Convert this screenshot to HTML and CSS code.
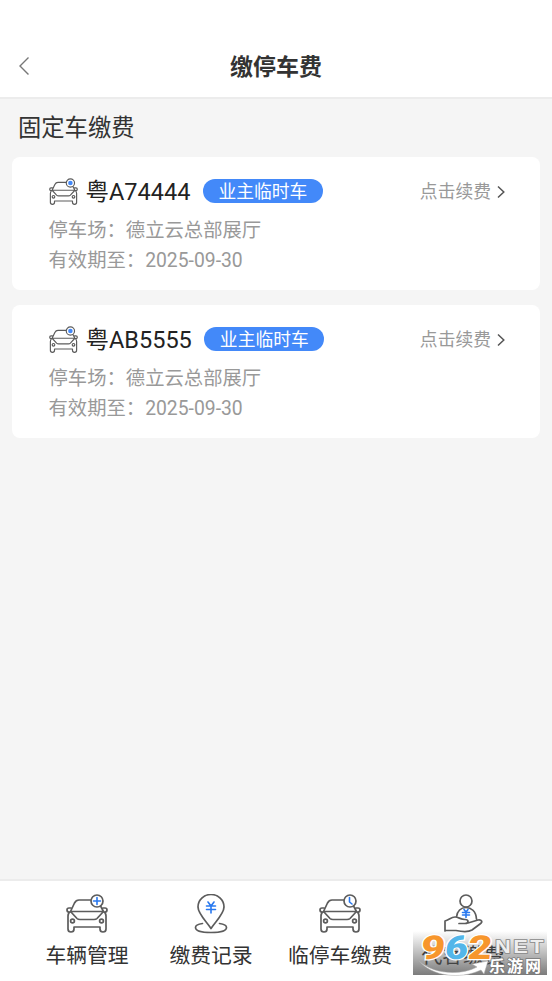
FILE: index.html
```html
<!DOCTYPE html>
<html lang="zh-CN">
<head>
<meta charset="utf-8">
<title>缴停车费</title>
<link rel="stylesheet" href="styles.css">
</head>
<body>
<svg class="defs" width="0" height="0" aria-hidden="true">
  <symbol id="car" viewBox="0 0 42 40">
    <path d="M26 6H13Q10 6 8.500 9L4.500 17.500H37.500L34 11M5 14H3Q1 14 1 16T3 18H5M37 14H39Q41 14 41 16T39 18H37M4.500 17.500Q2 19 2 22V35Q2 38 5 38Q8 38 8 35V33H34V35Q34 38 37 38Q40 38 40 35V22Q40 19 37.500 17.500M4.500 17.500L11 24.500Q12 25.500 14 25.500H28Q30 25.500 31 24.500L37.500 17.500"/>
    <circle cx="6.500" cy="27" r="1.900"/><circle cx="35.500" cy="27" r="1.900"/>
  </symbol>
</svg>
<div class="app">
  <header class="bar">
    <svg class="back" viewBox="0 0 12 20"><path d="M10.500 1.500L2 10L10.500 18.500"/></svg>
    <h1 class="title">缴停车费</h1>
  </header>
  <main class="content">
    <h2 class="section">固定车缴费</h2>
    <article class="card">
      <div class="head">
        <svg class="icon small" viewBox="0 0 42 40"><use href="#car"/><circle class="disc" cx="31" cy="7" r="6"/><circle class="dot" cx="31" cy="7" r="3.300"/></svg>
        <span class="plate">粤A74444</span><span class="tag">业主临时车</span>
        <span class="renew">点击续费</span><svg class="next" viewBox="0 0 8 14"><path d="M1 1.500L6.800 7L1 12.500"/></svg>
      </div>
      <p class="info">停车场：德立云总部展厅</p>
      <p class="info">有效期至：2025-09-30</p>
    </article>
    <article class="card">
      <div class="head">
        <svg class="icon small" viewBox="0 0 42 40"><use href="#car"/><circle class="disc" cx="31" cy="7" r="6"/><circle class="dot" cx="31" cy="7" r="3.300"/></svg>
        <span class="plate">粤AB5555</span><span class="tag">业主临时车</span>
        <span class="renew">点击续费</span><svg class="next" viewBox="0 0 8 14"><path d="M1 1.500L6.800 7L1 12.500"/></svg>
      </div>
      <p class="info">停车场：德立云总部展厅</p>
      <p class="info">有效期至：2025-09-30</p>
    </article>
  </main>
  <nav class="tabs">
    <div class="tab">
      <svg class="icon" viewBox="0 0 42 40"><use href="#car"/><circle class="disc" cx="31" cy="7" r="6"/><path class="blue" d="M31 3.500V10.500M27.500 7H34.500"/></svg>
      <span>车辆管理</span>
    </div>
    <div class="tab">
      <svg class="icon" viewBox="0 0 42 40"><path d="M21 34.500C17 28 8 20 8 13A13 12.500 0 0 1 34 13C34 20 25 28 21 34.500ZM12.500 29.500C8 30 5.500 31.500 5.500 33.500C5.500 37 12 38.500 21 38.500S36.500 37 36.500 33.500C36.500 31.500 34 30 29.500 29.500"/><path class="blue" d="M18 8L21 12L24 8M16.500 12H25.500M16.500 15.500H25.500M21 12V19"/></svg>
      <span>缴费记录</span>
    </div>
    <div class="tab">
      <svg class="icon" viewBox="0 0 42 40"><use href="#car"/><circle class="disc" cx="31" cy="7" r="6"/><path class="blue" d="M30.500 3.500V8L33 10"/></svg>
      <span>临停车缴费</span>
    </div>
    <div class="tab">
      <svg class="icon" viewBox="0 0 42 40"><circle cx="24" cy="7" r="6"/><path d="M14.500 23C15 17 19 13.500 24 13.500S34 17 34.500 25M3 37V27C7 26 9 23 13 23C17 23 18 25.500 23 25.500C27 25.500 27 29.500 23 29.500H17M26 29L36 26C40 25.500 41 28 38 30L30 36C26 38.500 21 38 14 36.500H3"/><path class="blue" d="M22 15.500L24 18L26 15.500M20.500 18.500H27.500M20.500 21H27.500M24 18V23.500"/></svg>
      <span>代客缴费</span>
    </div>
    <div class="mark">
      <svg viewBox="0 0 134 75">
        <path class="swoosh" d="M6 60C20 73 47 75 64 66L59 63L75 60L71 73L68 69C46 79 19 75 6 60Z"/>
        <g class="digits" transform="translate(6 0) skewX(-6)"><text class="orange" x="7" y="58" textLength="24" lengthAdjust="spacingAndGlyphs">9</text><text class="cyan" x="31" y="58" textLength="23" lengthAdjust="spacingAndGlyphs">6</text><text class="orange" x="54" y="58" textLength="24" lengthAdjust="spacingAndGlyphs">2</text></g>
        <text class="net" x="82" y="51.500" textLength="51" lengthAdjust="spacingAndGlyphs">NET</text>
        <text class="site" x="76" y="71" textLength="52">乐游网</text>
      </svg>
    </div>
  </nav>
</div>
</body>
</html>
```
FILE: styles.css
```css
* { box-sizing: border-box; }
body { margin: 0; font-family: Roboto, "Noto Sans CJK SC", sans-serif; color: #333; background: #f5f5f5; }
h1, h2, p { margin: 0; font-weight: 400; }
svg { fill: none; flex-shrink: 0; display: block; }
.defs { position: absolute; }
.app { height: 981px; display: flex; flex-direction: column; overflow: hidden; }
.bar { height: 99px; padding: 36px 18px 0; display: grid; grid-template-columns: 12px 1fr 12px; align-items: center; background: #fff; border-bottom: 2px solid #ececec; }
.back { width: 12px; height: 20px; margin-bottom: 2px; stroke: #777; stroke-width: 1.4; }
.title { padding-top: 3px; font-size: 23px; line-height: 34px; font-weight: 700; text-align: center; }
.content { flex: 1; padding: 0 12px; }
.section { height: 58px; padding-left: 6px; font-size: 23.3px; line-height: 59px; }
.card { height: 133px; margin-bottom: 15px; padding: 17px 35px 0 36.500px; border-radius: 8px; background: #fff; }
.head { height: 35px; margin-bottom: 7px; display: flex; align-items: center; }
.plate { margin-left: 8px; color: #222; font-size: 23.500px; line-height: 34px; }
.tag { width: 120px; height: 24px; margin: 0 0 2px 12.500px; border-radius: 12px; background: #4389f9; color: #fff; font-size: 17.800px; line-height: 25px; text-align: center; }
.renew { margin-left: auto; color: #999; font-size: 17.800px; line-height: 26px; }
.next { width: 8px; height: 14px; margin-left: 6px; stroke: #555; stroke-width: 1.5; }
.info { color: #999; font-size: 19.330px; line-height: 30.300px; }
.tabs { position: relative; height: 102px; padding: 13px 26px 0 25px; display: grid; grid-template-columns: 124px 124px 134px 112px; background: #fff; border-top: 2px solid #ececec; }
.tab { display: flex; flex-direction: column; align-items: center; font-size: 20.800px; line-height: 30px; white-space: nowrap; }
.tab span { margin-top: 7px; }
.icon { width: 42px; height: 40px; stroke: #5c5c5c; stroke-width: 1.700; stroke-linecap: round; stroke-linejoin: round; }
.small { width: 29px; height: 28px; stroke-width: 1.700; }
.disc { fill: #fff; }
.dot { fill: #4389f9; stroke: none; }
.blue { stroke: #2878ef; stroke-width: 1.600; }
.mark { position: absolute; left: 413px; top: 50px; width: 134px; height: 44px; background: linear-gradient(rgba(80,80,80,0), rgba(80,80,80,.75)); }
.mark svg { position: absolute; left: 0; bottom: -1px; width: 134px; height: 75px; overflow: visible; }
.digits { font: 900 33px Roboto, sans-serif; stroke: #fff; stroke-width: 2.500; paint-order: stroke; }
.orange { fill: #f7962c; }
.cyan { fill: #53b6e9; }
.net { font: 700 18px "Liberation Sans", sans-serif; letter-spacing: 2px; fill: #eee; stroke: #888; stroke-width: 1.500; paint-order: stroke; }
.site { font: 700 16px "Noto Sans CJK SC", sans-serif; fill: #fff; stroke: #777; stroke-width: 1.500; paint-order: stroke; }
.swoosh { fill: #fff; stroke: #aaa; stroke-width: .5; }
```
